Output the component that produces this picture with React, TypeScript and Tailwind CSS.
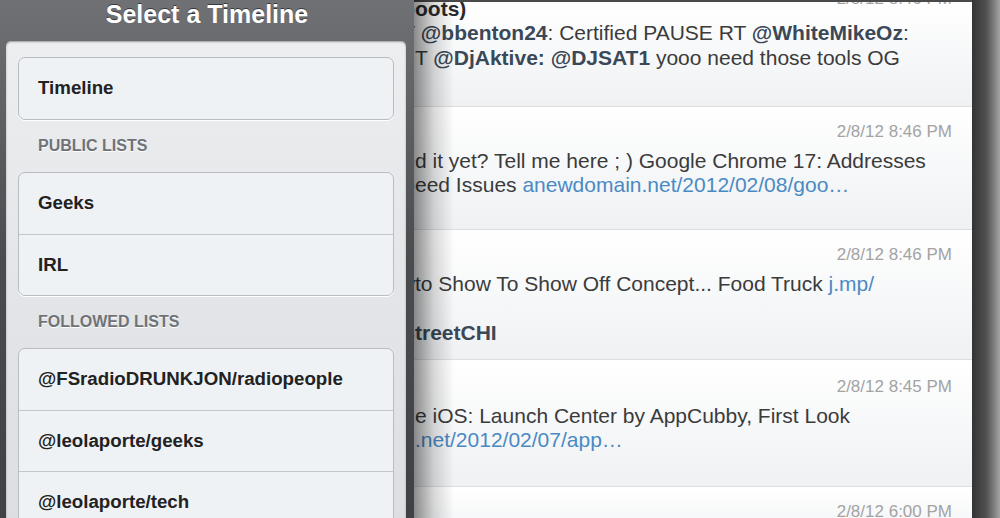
import React from "react";

type Part = { t: string; k?: "m" | "l" | "b" };
type Line = { pre: string; parts: Part[] };
type Tweet = { time: string; h: string; top: string; gap: string; lines: Line[] };

const tweets: Tweet[] = [
  {
    time: "2/8/12 8:46 PM",
    h: "h-[105px]",
    top: "-mt-[13px]",
    gap: "-mt-[13px]",
    lines: [
      { pre: "Mike Lopez (@Drumb", parts: [{ t: "oots)", k: "b" }] },
      { pre: "RT @djbooth: RT", parts: [{ t: "\u00a0" }, { t: "@bbenton24", k: "m" }, { t: ": Certified PAUSE RT " }, { t: "@WhiteMikeOz", k: "m" }, { t: ":" }] },
      { pre: "the real deal R", parts: [{ t: "T " }, { t: "@DjAktive:", k: "m" }, { t: " " }, { t: "@DJSAT1", k: "m" }, { t: " yooo need those tools OG" }] },
    ],
  },
  {
    time: "2/8/12 8:46 PM",
    h: "h-[123px]",
    top: "pt-[15px]",
    gap: "mt-[6px]",
    lines: [
      { pre: "Have you update", parts: [{ t: "d it yet? Tell me here ; ) Google Chrome 17: Addresses" }] },
      { pre: "Security, Sp", parts: [{ t: "eed Issues " }, { t: "anewdomain.net/2012/02/08/goo\u2026", k: "l" }] },
    ],
  },
  {
    time: "2/8/12 8:46 PM",
    h: "h-[130px]",
    top: "pt-[15px]",
    gap: "mt-[6px]",
    lines: [
      { pre: "Chicago Auto Show ", parts: [{ t: "to Show To Show Off Concept... Food Truck " }, { t: "j.mp/", k: "l" }] },
      { pre: "", parts: [{ t: "\u00a0" }] },
      { pre: "via @FoodTruckS", parts: [{ t: "treetCHI", k: "m" }] },
    ],
  },
  {
    time: "2/8/12 8:45 PM",
    h: "h-[127px]",
    top: "pt-[17px]",
    gap: "mt-[6px]",
    lines: [
      { pre: "Save Time on th", parts: [{ t: "e iOS: Launch Center by AppCubby, First Look" }] },
      { pre: "anewdomain", parts: [{ t: ".net/2012/02/07/app\u2026", k: "l" }] },
    ],
  },
  {
    time: "2/8/12 6:00 PM",
    h: "h-[60px]",
    top: "pt-[15px]",
    gap: "mt-[6px]",
    lines: [],
  },
];

const groups = [
  { head: null, items: ["Timeline"] },
  { head: "PUBLIC LISTS", items: ["Geeks", "IRL"] },
  { head: "FOLLOWED LISTS", items: ["@FSradioDRUNKJON/radiopeople", "@leolaporte/geeks", "@leolaporte/tech"] },
];

function TweetRow({ tw }: { tw: Tweet }) {
  return (
    <div className={`${tw.h} shrink-0 overflow-hidden border-b border-[#dcdfe2] bg-gradient-to-b from-white to-[#eff1f3]`}>
      <div className={tw.top}>
        <div className="flex h-[20px] items-center justify-end pr-[20px] text-[17px] text-[#a3a3a3]">
          {tw.time}
        </div>
        <div className={tw.gap}>
          {tw.lines.map((ln, i) => (
            <div key={i} className="flex h-[24.5px] items-center whitespace-nowrap text-[21px] text-[#3b3b3b]">
              <span className="w-[415px] shrink-0 text-right">{ln.pre}</span>
              <span>
                {ln.parts.map((p, j) => (
                  <span
                    key={j}
                    className={
                      p.k === "m"
                        ? "font-bold text-[#3a4857]"
                        : p.k === "l"
                        ? "text-[#4a8ac4]"
                        : p.k === "b"
                        ? "font-bold text-[#2a2a2a]"
                        : ""
                    }
                  >
                    {p.t}
                  </span>
                ))}
              </span>
            </div>
          ))}
        </div>
      </div>
    </div>
  );
}

export default function App() {
  return (
    <div className="relative flex h-[518px] w-[1000px] overflow-hidden bg-white font-['Liberation_Sans',Arial,sans-serif]">
      {/* Tweet list */}
      <div className="flex min-w-0 flex-1 flex-col border-t-2 border-[#4a4a4a]">
        {tweets.map((tw, i) => (
          <TweetRow key={i} tw={tw} />
        ))}
      </div>
      {/* right device frame */}
      <div className="w-[28px] shrink-0 bg-gradient-to-r from-[#343434] via-[#505050] to-[#a4a4a4]" />

      {/* shadow cast by the popover */}
      <div className="pointer-events-none absolute top-0 bottom-0 left-[414px] w-[40px] bg-gradient-to-r from-black/45 via-black/15 to-transparent" />

      {/* Select a Timeline popover */}
      <div className="absolute top-0 left-0 flex h-full w-[414px] flex-col bg-gradient-to-b from-[#6f7174] via-[#4a4c4f] to-[#3f4144]">
        <div className="flex h-[41px] shrink-0 items-start justify-center">
          <span className="text-[25px] leading-[28px] font-bold text-white [text-shadow:0_-1px_0_rgba(0,0,0,0.5)]">
            Select a Timeline
          </span>
        </div>
        <div className="ml-[6px] mr-[8px] flex-1 rounded-t-[5px] bg-gradient-to-b from-[#eceef0] via-[#e3e5e8] to-[#dcdee1] px-[12px] pt-[16px] shadow-[inset_0_1px_2px_rgba(0,0,0,0.35)]">
          {groups.map((g, gi) => (
            <div key={gi}>
              {g.head && (
                <div className="flex h-[52px] items-center pl-[20px] text-[16px] font-bold text-[#6f7377] [text-shadow:0_1px_0_#fff]">
                  {g.head}
                </div>
              )}
              <div className="overflow-hidden rounded-[7px] border border-[#b9bcc0] bg-[#eff2f5] shadow-[0_1px_0_#fff]">
                {g.items.map((it, ii) => (
                  <div
                    key={ii}
                    className={`flex h-[61px] items-center pl-[19px] text-[18.7px] font-bold text-[#222] ${
                      ii > 0 ? "border-t border-[#c2c5c9]" : ""
                    }`}
                  >
                    {it}
                  </div>
                ))}
              </div>
            </div>
          ))}
        </div>
      </div>
    </div>
  );
}
